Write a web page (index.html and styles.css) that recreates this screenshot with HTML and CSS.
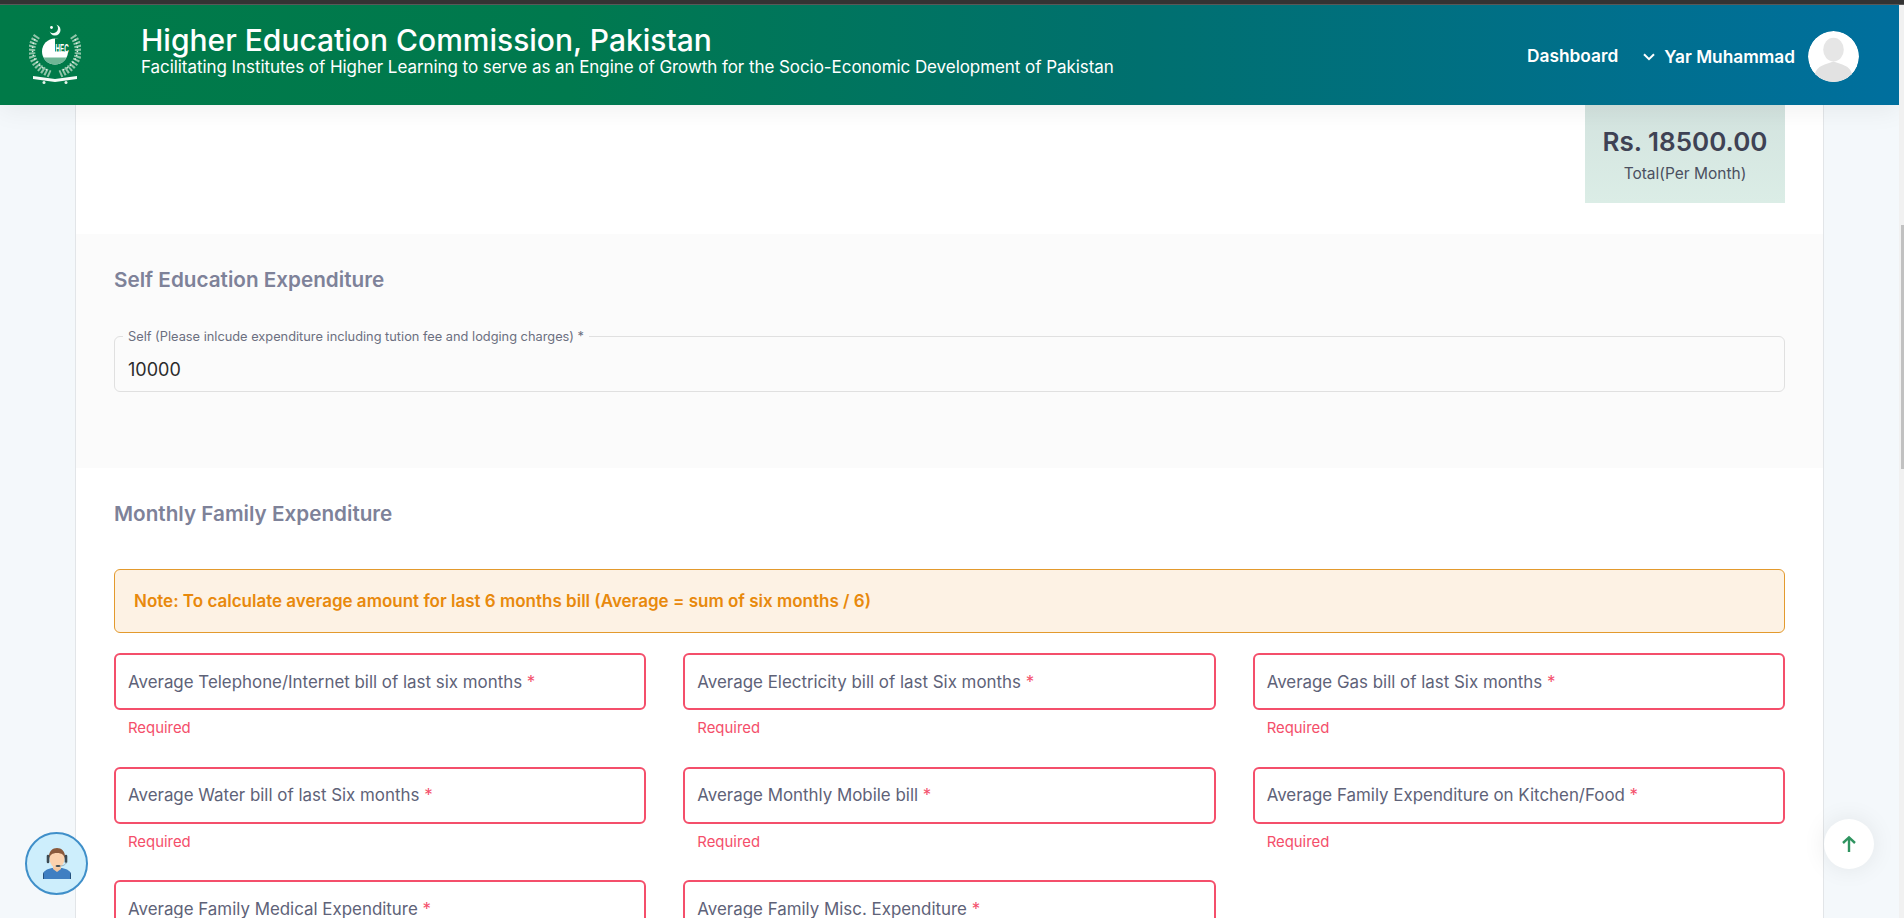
FILE: index.html
```html
<!DOCTYPE html>
<html lang="en">

<head>
    <meta charset="UTF-8">
    <meta name="viewport" content="width=device-width, initial-scale=1.0">
    <title>Higher Education Commission, Pakistan</title>
    <link rel="stylesheet" href="styles.css">
</head>

<body>
    <div class="browser-strip"></div>
    <header class="topbar">
        <div class="logo">
            <svg width="52" height="62" viewBox="0 0 52 62">
                <!-- crescent and star -->
                <circle cx="26" cy="6" r="5.5" fill="#f4fbf7"/>
                <circle cx="24" cy="4.300" r="5" fill="#007a48"/>
                <circle cx="22.500" cy="3.500" r="1.400" fill="#fff"/>
                <!-- wreath -->
                <path d="M8 12C-2 26 2 42 21 50M44 12C54 26 50 42 31 50" fill="none" stroke="#8fc4a8" stroke-width="7" stroke-dasharray="2 1.500"/>
                <path d="M6 15C0 28 5 41 20 47M46 15C52 28 47 41 32 47" fill="none" stroke="#e3f3ea" stroke-width="1.500" stroke-dasharray="1.500 2.500"/>
                <!-- disc -->
                <circle cx="26" cy="27.500" r="13" fill="#fff"/>
                <path d="M26 14.500h13v13H26z" fill="#007a48"/>
                <path d="M14.500 33.500h23a13 13 0 0 1-23 0z" fill="#6fb595"/>
                <text class="logo-hec" transform="translate(26.500 29) scale(.48 1)">HEC</text>
                <!-- banner -->
                <path d="M4 52l22 3 22-3v3l-22 3-22-3z" fill="#f4fbf7"/>
                <circle cx="15" cy="58.500" r="1.500" fill="#e3f3ea"/>
                <circle cx="37" cy="58.500" r="1.500" fill="#e3f3ea"/>
            </svg>
        </div>
        <div class="brand">
            <h1>Higher Education Commission, Pakistan</h1>
            <p>Facilitating Institutes of Higher Learning to serve as an Engine of Growth for the Socio-Economic Development of Pakistan</p>
        </div>
        <nav class="usernav">
            <a class="nav-link">Dashboard</a>
            <a class="nav-user">
                <svg width="12" height="12" viewBox="0 0 12 12"><path d="M1 3.200l5 5 5-5" fill="none" stroke="#fff" stroke-width="2"/></svg>
                Yar Muhammad
            </a>
            <div class="avatar">
                <svg width="51" height="51" viewBox="0 0 52 52">
                    <circle cx="26" cy="26" r="26" fill="#fff"/>
                    <ellipse cx="26" cy="19" rx="10.500" ry="12" fill="#e6e6e6"/>
                    <path d="M7 44c2-9 11-10 19-13 8 3 17 4 19 13a26 26 0 0 1-38 0z" fill="#e2e2e2"/>
                </svg>
            </div>
        </nav>
    </header>

    <main class="card">
        <div class="total-row">
            <div class="total-box">
                <strong>Rs. 18500.00</strong>
                <span>Total(Per Month)</span>
            </div>
        </div>

        <section class="section section-grey">
            <h2>Self Education Expenditure</h2>
            <div class="outline-field">
                <span class="outline-label">Self (Please inlcude expenditure including tution fee and lodging charges) *</span>
                <span class="outline-value">10000</span>
            </div>
        </section>

        <section class="section">
            <h2>Monthly Family Expenditure</h2>
            <div class="note">Note: To calculate average amount for last 6 months bill (Average = sum of six months / 6)</div>
            <div class="field-grid">
                <div class="field">
                    <div class="field-box">Average Telephone/Internet bill of last six months <em>*</em></div>
                    <small>Required</small>
                </div>
                <div class="field">
                    <div class="field-box">Average Electricity bill of last Six months <em>*</em></div>
                    <small>Required</small>
                </div>
                <div class="field">
                    <div class="field-box">Average Gas bill of last Six months <em>*</em></div>
                    <small>Required</small>
                </div>
                <div class="field">
                    <div class="field-box">Average Water bill of last Six months <em>*</em></div>
                    <small>Required</small>
                </div>
                <div class="field">
                    <div class="field-box">Average Monthly Mobile bill <em>*</em></div>
                    <small>Required</small>
                </div>
                <div class="field">
                    <div class="field-box">Average Family Expenditure on Kitchen/Food <em>*</em></div>
                    <small>Required</small>
                </div>
                <div class="field">
                    <div class="field-box">Average Family Medical Expenditure <em>*</em></div>
                </div>
                <div class="field">
                    <div class="field-box">Average Family Misc. Expenditure <em>*</em></div>
                </div>
            </div>
        </section>
    </main>

    <button class="help-btn" type="button">
        <svg width="36" height="36" viewBox="0 0 36 36">
            <path d="M4 33v-4c0-4 4-6 9-7h10c5 1 9 3 9 7v4z" fill="#3f7fc2"/>
            <path d="M4 33v-4c0-1 .3-2 1-3v7zM32 33v-4c0-1-.3-2-1-3v7z" fill="#24507c"/>
            <path d="M14 19h8v4l-4 3-4-3z" fill="#f3c7a0"/>
            <ellipse cx="18" cy="13" rx="7.500" ry="9" fill="#fbd2ae"/>
            <path d="M10 13c-1-8 4-11 8-11s9 3 8 11c-1-4-3-6-8-6s-7 2-8 6z" fill="#8a5a3c"/>
            <path d="M9 10v6M27 10v6" stroke="#3c4a52" stroke-width="2.600" stroke-linecap="round"/>
            <path d="M27 16c0 3-3 4-7 4" fill="none" stroke="#9fb4bf" stroke-width="1"/>
            <ellipse cx="19" cy="20" rx="2.500" ry="1" fill="#3c4a52"/>
        </svg>
    </button>
    <button class="top-btn" type="button">
        <svg width="18" height="18" viewBox="0 0 18 18"><path d="M9 17V2M3 8l6-5.600L15 8" fill="none" stroke="#2f9460" stroke-width="2.400"/></svg>
    </button>
    <div class="scroll-track"><div class="scroll-thumb"></div></div>
</body>

</html>
```
FILE: styles.css
```css
/* page */
body {
    margin: 0;
    padding: 0;
    height: 918px;
    overflow: hidden;
    font-family: 'Inter', 'Open Sans', Arial, sans-serif;
    background-color: #f4f8fb;
    color: #3f4254;
    display: flex;
    flex-direction: column;
}

.browser-strip {
    height: 5px;
    background-color: #343434;
    border-bottom: 1px solid #5a5a5a;
    box-sizing: border-box;
    flex-shrink: 0;
}

/* header */
.topbar {
    height: 100px;
    margin-right: 5px;
    display: flex;
    align-items: center;
    background: linear-gradient(90deg, #007a48 0%, #00794e 30%, #00706f 60%, #006f9e 100%);
    box-shadow: 0 6px 24px rgba(0, 0, 0, 0.06);
    color: #fff;
    position: relative;
    z-index: 2;
    flex-shrink: 0;
}

.logo {
    width: 141px;
    padding-left: 29px;
    box-sizing: border-box;
    display: flex;
}

.logo-hec {
    font-size: 13px;
    font-weight: 700;
    fill: #fff;
    font-family: 'Liberation Sans', Arial, sans-serif;
}

.brand {
    padding-bottom: 10px;
}

.brand h1 {
    margin: 0;
    font-size: 30px;
    font-weight: 500;
    line-height: 34px;
}

.brand p {
    margin: 0;
    font-size: 17px;
    letter-spacing: -0.06px;
    line-height: 20px;
}

.usernav {
    margin-left: auto;
    padding-right: 40px;
    padding-top: 3px;
    display: flex;
    align-items: center;
    font-size: 17.3px;
    font-weight: 600;
}

.nav-link {
    margin-right: 25px;
    padding-bottom: 2px;
}

.nav-user {
    display: flex;
    align-items: center;
    gap: 9px;
    margin-right: 13px;
}

.avatar {
    width: 51px;
    height: 51px;
    border-radius: 50%;
    overflow: hidden;
}

/* card */
.card {
    margin: 0 80px 0 75px;
    border-left: 1px solid #e2e5e8;
    border-right: 1px solid #e2e5e8;
    background-color: #fff;
    flex: 1;
    overflow: hidden;
}

.total-row {
    height: 129px;
    padding-right: 38px;
    display: flex;
    justify-content: flex-end;
}

.total-box {
    width: 200px;
    height: 98px;
    background: linear-gradient(180deg, #d3e3df 0%, #dbede6 100%);
    display: flex;
    flex-direction: column;
    align-items: center;
    justify-content: center;
    gap: 5px;
}

.total-box strong {
    font-size: 26px;
    font-weight: 600;
    line-height: 34px;
    color: #3f4254;
}

.total-box span {
    font-size: 15.5px;
    line-height: 20px;
    color: #4b5060;
}

.section {
    padding: 31px 38px 0 38px;
}

.section-grey {
    background-color: #fbfbfb;
    height: 234px;
    box-sizing: border-box;
}

.section h2 {
    margin: 0;
    font-size: 20.7px;
    line-height: 30px;
    font-weight: 600;
    color: #7e8299;
}

/* self field */
.outline-field {
    margin-top: 41px;
    height: 56px;
    box-sizing: border-box;
    border: 1px solid #e0e0e0;
    border-radius: 6px;
    padding: 10px 13px 0;
    position: relative;
    display: flex;
    align-items: center;
}

.outline-label {
    position: absolute;
    left: 8px;
    top: -8px;
    padding: 0 5px;
    background-color: #fbfbfb;
    font-size: 12.8px;
    line-height: 16px;
    color: #6b6f80;
}

.outline-value {
    font-size: 18px;
    color: #2b2b2b;
}

/* note */
.note {
    margin-top: 40px;
    height: 64px;
    box-sizing: border-box;
    border: 1px solid #e39a2d;
    border-radius: 6px;
    background-color: #fdf2e4;
    color: #e8890c;
    font-size: 17px;
    font-weight: 600;
    padding: 0 19px;
    display: flex;
    align-items: center;
}

/* form grid */
.field-grid {
    margin-top: 20px;
    display: grid;
    grid-template-columns: repeat(3, 1fr);
    column-gap: 37px;
}

.field {
    height: 113.5px;
}

.field-box {
    height: 57px;
    box-sizing: border-box;
    border: 2px solid #f44f6b;
    border-radius: 6px;
    padding: 0 12px;
    display: flex;
    align-items: center;
    font-size: 16.9px;
    color: #5e6278;
    white-space: pre-wrap;
}

.field-box em {
    font-style: normal;
    color: #f44f6b;
}

.field small {
    display: block;
    margin-top: 8px;
    padding-left: 14px;
    font-size: 14.9px;
    line-height: 20px;
    color: #f44f6b;
}

/* floating buttons */
.help-btn {
    position: absolute;
    left: 25px;
    top: 832px;
    width: 63px;
    height: 63px;
    padding: 0;
    border-radius: 50%;
    border: 2px solid #3f8fc9;
    background-color: #cdeefc;
    display: flex;
    align-items: center;
    justify-content: center;
    overflow: hidden;
    z-index: 3;
}

.top-btn {
    position: absolute;
    left: 1824px;
    top: 819px;
    width: 50px;
    height: 50px;
    padding: 0;
    border: none;
    border-radius: 50%;
    background-color: #fff;
    box-shadow: 0 0 24px rgba(0, 0, 0, 0.08);
    display: flex;
    align-items: center;
    justify-content: center;
    z-index: 3;
}

.scroll-track {
    position: absolute;
    right: 0;
    top: 5px;
    bottom: 0;
    width: 5px;
    background-color: #f1f1f1;
    z-index: 4;
}

.scroll-thumb {
    position: absolute;
    top: 220px;
    right: 0;
    width: 3px;
    height: 244px;
    background-color: #c1c1c1;
}
```
